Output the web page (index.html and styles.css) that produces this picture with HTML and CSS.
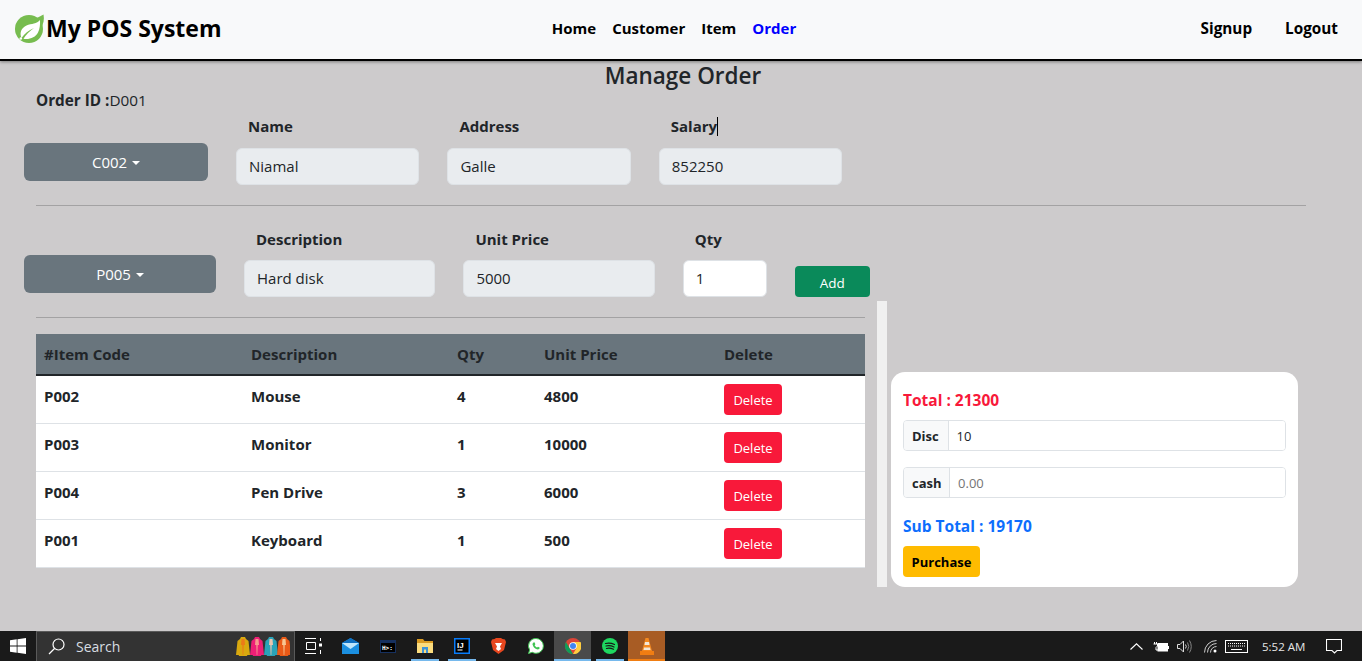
FILE: index.html
```html
<!DOCTYPE html>
<html lang="en">
<head>
    <meta charset="UTF-8">
    <meta name="viewport" content="width=device-width, initial-scale=1.0">
    <title>Manage Order</title>
    <link rel="stylesheet" href="styles.css">
</head>
<body>

<nav class="navbar">
    <a class="brand">
        <svg class="brand-logo" viewBox="0 0 30 30">
            <circle cx="14" cy="16" r="14" fill="#77bc4f"/>
            <path d="M28.500 1.500C29.500 6 28.500 11 26 15L20 6z" fill="#77bc4f"/>
            <path d="M25 7C22 11 16.500 10.500 11.500 12.500 6.500 14.800 4.200 19.500 6.500 25 9.500 20.500 13.500 17.500 19 15 14.500 18.500 11 21.500 8.500 25.800 14.500 26.800 20.500 24.500 23 19.500 24.800 16 25.300 11 25 7z" fill="#fff"/>
            <circle cx="5.800" cy="25.500" r="1.300" fill="#fff"/>
        </svg>
        My POS System
    </a>
    <div class="nav-center">
        <a class="nav-link">Home</a>
        <a class="nav-link">Customer</a>
        <a class="nav-link">Item</a>
        <a class="nav-link active">Order</a>
    </div>
    <div class="nav-right">
        <a class="nav-link">Signup</a>
        <a class="nav-link">Logout</a>
    </div>
</nav>

<main class="page">
    <h1 class="page-title">Manage Order</h1>
    <p class="order-id"><b>Order ID :</b>D001</p>

    <div class="form-row customer-row">
        <button class="btn-drop customer-drop">C002 <span class="caret"></span></button>
        <div class="field customer-field">
            <label>Name</label>
            <input class="form-control" type="text" value="Niamal" disabled>
        </div>
        <div class="field customer-field">
            <label>Address</label>
            <input class="form-control" type="text" value="Galle" disabled>
        </div>
        <div class="field customer-field">
            <label>Salary<span class="text-cursor"></span></label>
            <input class="form-control" type="text" value="852250" disabled>
        </div>
    </div>
    <hr class="line line-full">

    <div class="form-row item-row">
        <button class="btn-drop item-drop">P005 <span class="caret"></span></button>
        <div class="field item-field">
            <label>Description</label>
            <input class="form-control" type="text" value="Hard disk" disabled>
        </div>
        <div class="field item-field">
            <label>Unit Price</label>
            <input class="form-control" type="text" value="5000" disabled>
        </div>
        <div class="field qty-field">
            <label>Qty</label>
            <input class="form-control qty-input" type="text" value="1">
        </div>
        <button class="btn-add">Add</button>
    </div>

    <div class="lower">
        <div class="left-col">
            <hr class="line">
            <table class="cart">
                <colgroup>
                    <col class="col-code"><col class="col-desc"><col class="col-qty"><col class="col-price"><col>
                </colgroup>
                <thead>
                    <tr>
                        <th>#Item Code</th>
                        <th>Description</th>
                        <th>Qty</th>
                        <th>Unit Price</th>
                        <th>Delete</th>
                    </tr>
                </thead>
                <tbody>
                    <tr><td>P002</td><td>Mouse</td><td>4</td><td>4800</td><td><button class="btn-delete">Delete</button></td></tr>
                    <tr><td>P003</td><td>Monitor</td><td>1</td><td>10000</td><td><button class="btn-delete">Delete</button></td></tr>
                    <tr><td>P004</td><td>Pen Drive</td><td>3</td><td>6000</td><td><button class="btn-delete">Delete</button></td></tr>
                    <tr><td>P001</td><td>Keyboard</td><td>1</td><td>500</td><td><button class="btn-delete">Delete</button></td></tr>
                </tbody>
            </table>
        </div>
        <div class="divider"></div>
        <div class="summary">
            <div class="total">Total : 21300</div>
            <div class="input-group">
                <span class="group-label">Disc</span>
                <input class="group-input" type="text" value="10">
            </div>
            <div class="input-group">
                <span class="group-label">cash</span>
                <input class="group-input" type="text" placeholder="0.00">
            </div>
            <div class="sub-total">Sub Total : 19170</div>
            <button class="btn-purchase">Purchase</button>
        </div>
    </div>
</main>

<footer class="taskbar">
    <div class="start">
        <svg width="16" height="16" viewBox="0 0 16 16" fill="#fff"><path d="M0 2.300 6.700 1.300V7.600H0zM7.500 1.200 16 0V7.600H7.500zM0 8.400H6.700V14.700L0 13.700zM7.500 8.400H16V16L7.500 14.800z"/></svg>
    </div>
    <div class="search">
        <svg class="search-icon" width="17" height="17" viewBox="0 0 17 17" fill="none" stroke="#fff" stroke-width="1.200"><circle cx="10.500" cy="6.500" r="5.500"/><path d="M6.500 10.500 1 16"/></svg>
        <span class="search-text">Search</span>
        <svg class="dresses" width="54" height="21" viewBox="0 0 54 21">
            <defs>
                <path id="robe" d="M4 1H8L9 3 11.500 5 13 19H10.500L9.800 20H2.200L1.500 19H-1L.5 5 3 3z"/>
                <path id="robe-front" d="M4.500 3H7.500L8 9H6.700L6.300 19H5.700L5.300 9H4z"/>
            </defs>
            <use href="#robe" x="1" fill="#d9a90f"/><use href="#robe-front" x="1" fill="#ec7a18"/>
            <use href="#robe" x="15" fill="#ee1f76"/><use href="#robe-front" x="15" fill="#f79a8e"/>
            <use href="#robe" x="29" fill="#2aa3b8"/><use href="#robe-front" x="29" fill="#ecc4ae"/>
            <use href="#robe" x="42" fill="#ea5a17"/><use href="#robe-front" x="42" fill="#f7c591"/>
        </svg>
    </div>
    <div class="task-slot">
        <svg width="17" height="16" viewBox="0 0 17 16" fill="none" stroke="#fff"><path d="M0 .5H11M0 15.500H11M1.500 4.500H10.500V11.500H1.500zM15.500 0V3M15.500 12V16"/><path d="M14 5.500h3v3h-3z" fill="#fff" stroke="none"/></svg>
    </div>
    <div class="task-slot">
        <svg width="17" height="16" viewBox="0 0 17 16"><path d="M0 5 8.500 0 17 5V16H0z" fill="#1b8fe0"/><path d="M0 5H17L8.500 11z" fill="#bfe6fb"/><path d="M0 5 8.500 0 17 5z" fill="#0f6fc0"/></svg>
    </div>
    <div class="task-slot">
        <svg width="16" height="13" viewBox="0 0 16 13"><rect width="16" height="13" fill="#16305f"/><rect x="1" y="3" width="14" height="9" fill="#000"/><text x="2" y="10" class="cmd-text">H&gt;:</text></svg>
    </div>
    <div class="task-slot pinned">
        <svg width="16" height="14" viewBox="0 0 16 14"><path d="M0 0H6L7.500 2H16V14H0z" fill="#d99a22"/><path d="M0 4H16V14H0z" fill="#fbdc7e"/><path d="M5 8H11V14H9V10.500H7V14H5z" fill="#3d93d8"/></svg>
    </div>
    <div class="task-slot pinned">
        <svg width="16" height="16" viewBox="0 0 16 16"><rect width="16" height="16" fill="#087cfa"/><rect x="1.500" y="1.500" width="13" height="13" fill="#000"/><text x="3" y="9.500" class="ij-text">IJ</text><rect x="3.500" y="11.500" width="5" height="1" fill="#fff"/></svg>
    </div>
    <div class="task-slot">
        <svg width="15" height="16" viewBox="0 0 15 16"><path d="M3.500 1 5 0H10L11.500 1 14 1.500 15 4 13 12 7.500 16 2 12 0 4 1 1.500z" fill="#e8471f"/><path d="M4 5H11L9 8.500 10 11 7.500 13 5 11 6 8.500z" fill="#fff"/></svg>
    </div>
    <div class="task-slot">
        <svg width="16" height="16" viewBox="0 0 16 16"><path d="M8 .5A7.400 7.400 0 0 1 8 15.300 7.400 7.400 0 0 1 4.300 14.300L.5 15.500 1.700 12A7.400 7.400 0 0 1 8 .5z" fill="#fff" stroke="#3fc351"/><path d="M5.500 4.500 6.500 4.300 7.400 6.300 6.600 7.300Q7.800 9.300 9 9.600L10 8.700 11.800 9.800Q11.500 11.500 9.800 11.500 6 11 4.500 6.500 4.500 5.200 5.500 4.500z" fill="#3fc351"/></svg>
    </div>
    <div class="task-slot chrome">
        <svg width="16" height="16" viewBox="0 0 16 16"><circle cx="8" cy="8" r="8" fill="#dc4437"/><path d="M1 4 4.500 10 8 16A8 8 0 0 1 1 4z" fill="#0f9d58"/><path d="M8 16 11.500 10 8 4H15.500A8 8 0 0 1 8 16z" fill="#ffcd40"/><circle cx="8" cy="8" r="3.800" fill="#fff"/><circle cx="8" cy="8" r="3" fill="#4285f4"/></svg>
    </div>
    <div class="task-slot pinned">
        <svg width="16" height="16" viewBox="0 0 16 16" fill="none"><circle cx="8" cy="8" r="8" fill="#1ed760"/><path d="M3.500 5.500Q8 4.300 12.500 6.500M4 8Q8 7 12 9M4.500 10.500Q8 9.700 11.500 11.200" stroke="#171717" stroke-width="1.200" stroke-linecap="round"/></svg>
    </div>
    <div class="task-slot vlc">
        <svg width="16" height="17" viewBox="0 0 16 17"><path d="M6.500 0H9.500L13 13H3z" fill="#f5891f"/><path d="M6 4H10L10.500 7H5.500zM5 9.500H11L11.500 12H4.500z" fill="#f4e7d7"/><path d="M1 13H15V17H1z" fill="#f07d12"/></svg>
    </div>

    <div class="tray">
        <svg class="tray-chevron" width="13" height="7" viewBox="0 0 13 7" fill="none" stroke="#fff" stroke-width="1.100"><path d="M.5 6.500 6.500 .8 12.500 6.500"/></svg>
        <svg class="tray-battery" width="16" height="11" viewBox="0 0 16 11"><path d="M1.500 1V3M3.500 1V3M.5 3H4.500V5L3 6.500V9H5" stroke="#fff" fill="none"/><rect x="5" y="2.500" width="9.500" height="7.500" fill="#fff" stroke="#fff"/><rect x="15" y="5" width="1" height="3" fill="#fff"/></svg>
        <svg class="tray-volume" width="15" height="13" viewBox="0 0 15 13" fill="none" stroke="#ddd"><path d="M.5 4.500H3L6.500 1V12L3 8.500H.5zM8.500 4.500Q10 6.500 8.500 8.500" /><path d="M10.500 2.500Q13 6.500 10.500 10.500M12.500 .5Q16 6.500 12.500 12.500" stroke="#888"/></svg>
        <svg class="tray-wifi" width="13" height="13" viewBox="0 0 13 13" fill="none" stroke="#ccc"><path d="M.5 12.500A12 12 0 0 1 12.500 .5M3.500 12.500A9 9 0 0 1 12.500 3.500M6.500 12.500A6 6 0 0 1 12.500 6.500" /><circle cx="11" cy="11" r="1.500" fill="#fff" stroke="none"/></svg>
        <svg class="tray-keyboard" width="23" height="13" viewBox="0 0 23 13" fill="none" stroke="#fff"><rect x=".5" y=".5" width="22" height="12"/><path d="M3 3.500H20M3 6H20" stroke-dasharray="1 1"/><path d="M6 9.500H17"/></svg>
        <span class="tray-time">5:52 AM</span>
        <svg class="tray-note" width="16" height="15" viewBox="0 0 16 15" fill="none" stroke="#fff" stroke-width="1.100"><path d="M.5 .5H15.500V11.500H11L8.500 14 6 11.500H.5z"/></svg>
    </div>
</footer>

</body>
</html>
```

FILE: styles.css
```css
* {
    box-sizing: border-box;
}
body {
    margin: 0;
    height: 100vh;
    overflow: hidden;
    display: flex;
    flex-direction: column;
    font-family: "Open Sans", "Noto Sans", Arial, sans-serif;
    font-size: 15px;
    color: #212529;
    background-color: #cdcbcc;
}

/* top bar */
.navbar {
    height: 61px;
    flex: none;
    display: grid;
    grid-template-columns: 1fr auto 1fr;
    align-items: center;
    padding: 0 24px 3px 15px;
    background-color: #f8f9fa;
    border-bottom: 2px solid #000;
    box-shadow: 0 1px 3px rgba(0, 0, 0, 0.4);
    color: #000;
}
.brand {
    display: flex;
    align-items: center;
    gap: 1px;
    font-size: 23px;
    font-weight: 700;
}
.brand-logo {
    width: 30px;
    height: 30px;
}
.nav-center {
    display: flex;
    gap: 16px;
    margin-right: 5px;
}
.nav-right {
    display: flex;
    justify-content: flex-end;
    gap: 33px;
    font-size: 15.300px;
}
.nav-link {
    font-weight: 700;
}
.active {
    color: #00f;
}

/* page */
.page {
    flex: 1;
    min-height: 0;
    padding: 0 0 0 24px;
}
.page-title {
    height: 29px;
    margin: 0;
    width: 1318px;
    text-align: center;
    font-size: 22.500px;
    font-weight: 600;
    line-height: 30px;
}
.order-id {
    margin: 0 0 0 12px;
    font-size: 15.300px;
    line-height: 20px;
}
.form-row {
    display: flex;
    align-items: flex-end;
}
.customer-row {
    margin-top: 6px;
    gap: 28px;
}
.item-row {
    margin-top: 23px;
    gap: 28px;
}
.btn-drop {
    height: 38px;
    border: 0;
    border-radius: 6px;
    background-color: #69757d;
    color: #fff;
    font: inherit;
    margin-bottom: 4px;
}
.customer-drop {
    width: 184px;
}
.item-drop {
    width: 192px;
}
.caret {
    display: inline-block;
    margin-left: 1px;
    vertical-align: 3px;
    border-top: 4px solid #fff;
    border-left: 4px solid transparent;
    border-right: 4px solid transparent;
}
.field label {
    display: block;
    font-weight: 700;
    line-height: 20px;
    margin: 0 0 11px 12px;
}
.customer-field {
    width: 183.400px;
}
.customer-field label {
    margin-bottom: 12px;
}
.item-field {
    width: 191.400px;
}
.qty-field {
    width: 84px;
}
.form-control {
    display: block;
    width: 100%;
    height: 37px;
    padding: 0 12px 2px;
    font: inherit;
    color: #212529;
    background-color: #e9ecef;
    border: 1px solid #dee2e6;
    border-radius: 6px;
}
.qty-input {
    background-color: #fff;
}
.text-cursor {
    display: inline-block;
    width: 1px;
    height: 19px;
    vertical-align: -4px;
    background-color: #000;
}
.btn-add {
    width: 75px;
    height: 31px;
    border: 0;
    border-radius: 4px;
    background-color: #0a8a5a;
    color: #fff;
    font: inherit;
    font-size: 13.500px;
    padding-top: 3px;
}
.line {
    height: 1px;
    margin: 0;
    border: 0;
    background-color: #a3a2a3;
}
.line-full {
    width: 1270px;
    margin: 20px 0 0 12px;
}

/* order table and summary */
.lower {
    display: flex;
    align-items: flex-end;
    margin-top: 4px;
    height: 286px;
}
.left-col {
    width: 829px;
    margin-left: 12px;
    align-self: flex-start;
    padding-top: 16px;
}
.cart {
    width: 100%;
    margin-top: 16px;
    border-collapse: collapse;
    table-layout: fixed;
    font-weight: 700;
    background-color: #fff;
}
.col-code {
    width: 207px;
}
.col-desc {
    width: 206px;
}
.col-qty {
    width: 87px;
}
.col-price {
    width: 180px;
}
.cart th {
    height: 41px;
    padding: 0 8px;
    text-align: left;
    background-color: #69757d;
    border-bottom: 2px solid #212529;
}
.cart td {
    height: 48px;
    padding: 0 8px 6px;
    border-bottom: 1px solid #dee2e6;
}
.btn-delete {
    display: block;
    width: 58px;
    height: 31px;
    margin-top: 6px;
    padding: 2px 0 0;
    border: 0;
    border-radius: 4px;
    background-color: #f8193a;
    color: #fff;
    font: inherit;
    font-size: 13px;
    font-weight: 400;
}
.divider {
    width: 10px;
    height: 286px;
    margin-left: 12px;
    background-color: #f0f0f0;
}
.summary {
    width: 407px;
    height: 215px;
    margin-left: 4px;
    padding: 18px 12px 10px;
    border-radius: 14px;
    background-color: #fff;
    font-weight: 700;
}
.total {
    color: #f8193a;
    font-size: 15.500px;
    line-height: 20px;
    margin-bottom: 10px;
}
.input-group {
    display: flex;
    height: 31px;
    margin-bottom: 16px;
    border: 1px solid #dee2e6;
    border-radius: 4px;
    font-size: 13px;
    overflow: hidden;
}
.input-group + .input-group {
    margin-bottom: 18px;
}
.group-label {
    display: flex;
    align-items: center;
    min-width: 44.500px;
    padding: 0 7.500px 0 8px;
    background-color: #f8f9fa;
    border-right: 1px solid #dee2e6;
}
.group-input {
    flex: 1;
    min-width: 0;
    padding: 0 8px;
    border: 0;
    font: inherit;
    font-weight: 400;
    color: #212529;
}
.sub-total {
    color: #0d6efd;
    font-size: 15.500px;
    line-height: 20px;
    margin-bottom: 10px;
}
.btn-purchase {
    width: 77px;
    height: 31px;
    padding: 0;
    border: 0;
    border-radius: 4px;
    background-color: #ffbb00;
    color: #000;
    font: inherit;
    font-size: 13px;
}

/* windows taskbar */
.taskbar {
    height: 30px;
    flex: none;
    display: flex;
    align-items: stretch;
    background-color: #1a1a1a;
    color: #fff;
}
.start {
    width: 36px;
    display: flex;
    align-items: center;
    justify-content: center;
}
.search {
    width: 259px;
    display: flex;
    align-items: center;
    padding: 0 2px 0 11px;
    background-color: #333;
    border: 1px solid #5a5a5a;
    border-bottom-width: 0;
}
.search-text {
    margin-left: 11px;
    font-size: 14px;
    color: #d8dde2;
}
.dresses {
    margin-left: auto;
    margin-right: 2px;
}
.task-slot {
    width: 37px;
    display: flex;
    align-items: center;
    justify-content: center;
}
.pinned {
    background: linear-gradient(#76b9ed, #76b9ed) no-repeat center bottom / 28px 2px;
}
.chrome {
    background: linear-gradient(#76b9ed, #76b9ed) no-repeat center bottom / 100% 2px, #4a4a4a;
}
.vlc {
    background: linear-gradient(#f07d12, #f07d12) no-repeat center bottom / 100% 2px, #a85c24;
}
.cmd-text {
    font-family: "DejaVu Sans Mono", monospace;
    font-size: 6px;
    font-weight: 700;
    fill: #fff;
}
.ij-text {
    font-family: "Liberation Sans", sans-serif;
    font-size: 8px;
    font-weight: 700;
    fill: #fff;
}
.tray {
    flex: 1;
    display: flex;
    align-items: center;
    padding-left: 465px;
}
.tray-battery {
    margin-left: 10px;
}
.tray-volume {
    margin-left: 8px;
}
.tray-wifi {
    margin-left: 12px;
}
.tray-keyboard {
    margin-left: 8px;
}
.tray-time {
    margin-left: 14px;
    font-size: 11.500px;
    color: #e6e6e6;
}
.tray-note {
    margin-left: 21px;
}
```
